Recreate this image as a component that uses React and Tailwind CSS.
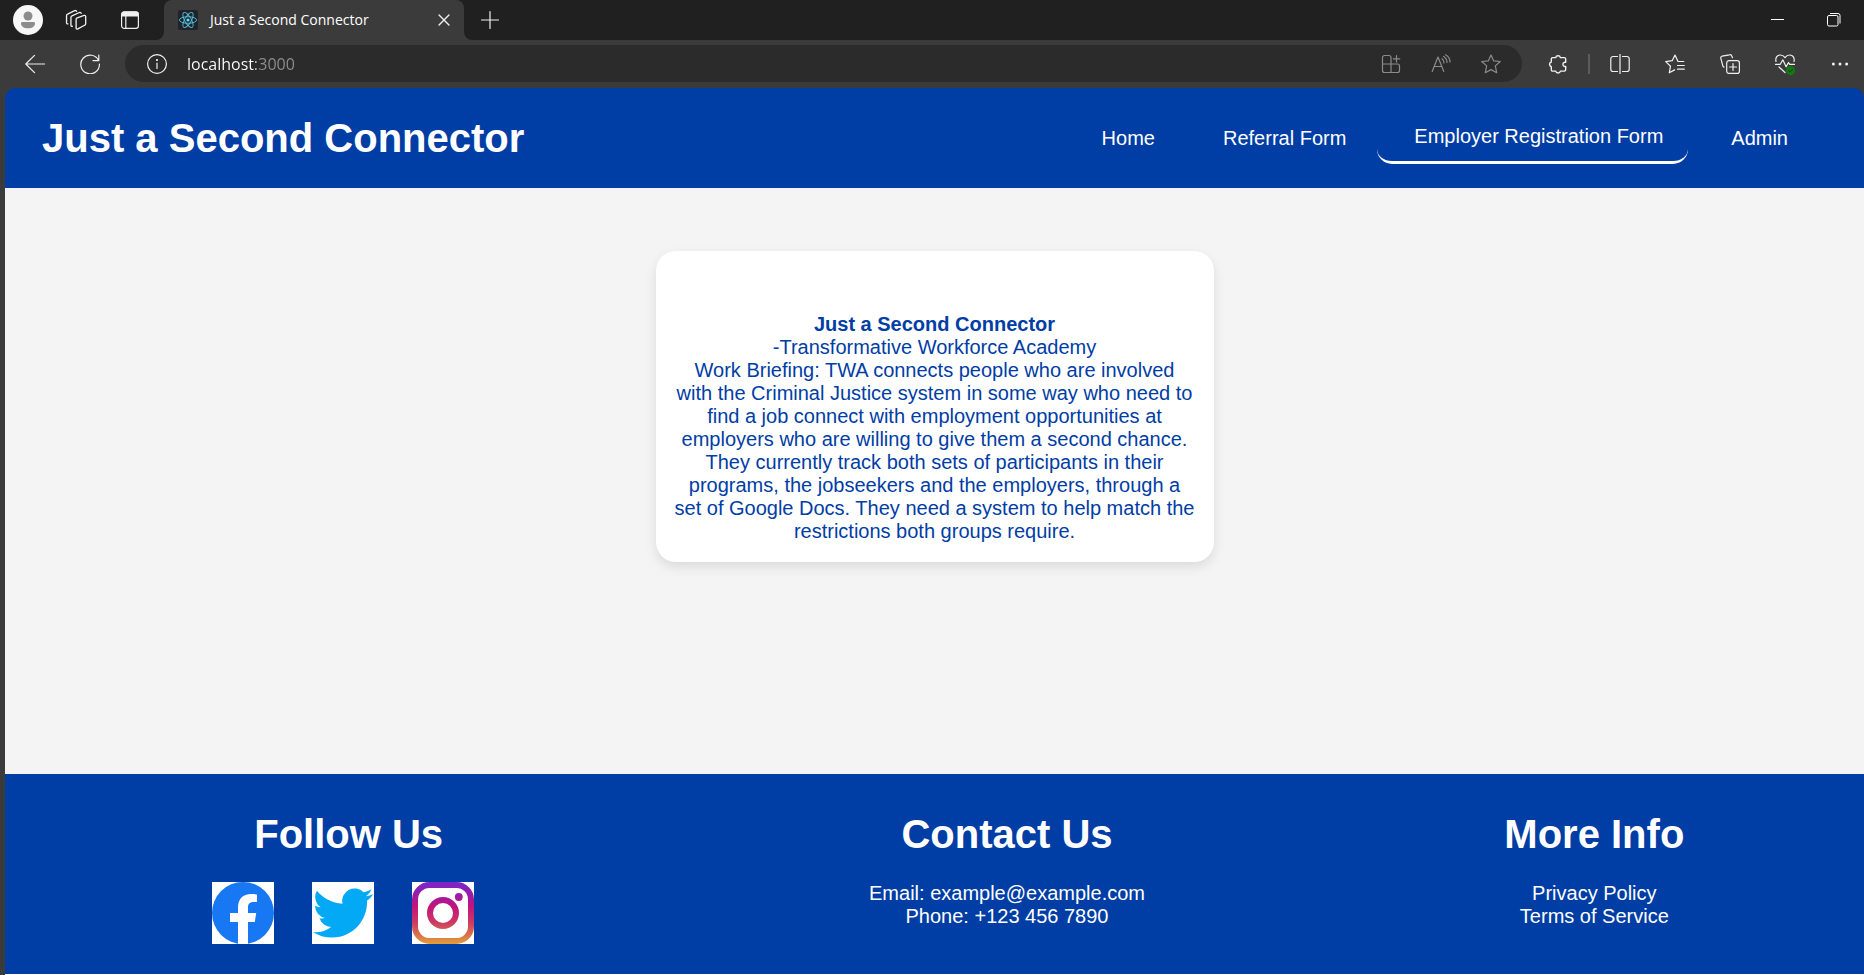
import React from "react";

function Icon({ size = "size-5", children }) {
  return (
    <svg
      viewBox="0 0 20 20"
      className={`${size} shrink-0`}
      fill="none"
      stroke="currentColor"
      strokeWidth="1.2"
      strokeLinecap="round"
      strokeLinejoin="round"
      aria-hidden="true"
    >
      {children}
    </svg>
  );
}

function BarButton({ label, className = "w-12", children }) {
  return (
    <button
      type="button"
      aria-label={label}
      className={`flex h-8 shrink-0 items-center justify-center ${className}`}
    >
      {children}
    </button>
  );
}

function ReactFavicon() {
  return (
    <svg viewBox="0 0 20 20" className="size-5 shrink-0" aria-hidden="true">
      <rect width="20" height="20" rx="2" fill="#20232a" />
      <g fill="none" stroke="#53c1de" strokeWidth="0.9">
        <ellipse cx="10" cy="10" rx="8.6" ry="3.3" />
        <ellipse cx="10" cy="10" rx="8.6" ry="3.3" transform="rotate(60 10 10)" />
        <ellipse cx="10" cy="10" rx="8.6" ry="3.3" transform="rotate(120 10 10)" />
      </g>
      <circle cx="10" cy="10" r="1.6" fill="#61dafb" />
    </svg>
  );
}

function TabStrip() {
  return (
    <div className="flex h-10 items-center bg-[#202020] text-[#f0f0f0]">
      <div className="flex flex-1 items-center self-stretch">
        <BarButton label="Profile" className="ml-1 w-12">
          <svg viewBox="0 0 30 30" className="size-[30px]" aria-hidden="true">
            <circle cx="15" cy="15" r="15" fill="#f7f7f7" />
            <circle cx="15" cy="11" r="4.5" fill="#8c8c8c" />
            <path d="M9.5 17h11c1 0 1.5.6 1.5 1.4 0 3-3 4.9-7 4.9s-7-1.9-7-4.9c0-.8.5-1.4 1.5-1.4z" fill="#8c8c8c" />
          </svg>
        </BarButton>
        <BarButton label="Workspaces" className="w-12">
          <Icon size="size-[22px]">
            <path d="M10.600 8.200 17.400 5.800c.8-.2 1.400.2 1.400 1v6.600c0 .7-.4 1.200-1 1.400l-6.100 3.300c-.8.4-1.600 0-1.600-.9V9.500c0-.6 0-1.100.5-1.300z" />
            <path d="M6.700 15.700c-.8.2-1.300-.2-1.300-.9V7.700c0-.7.4-1.200 1-1.400L13 3.200c.8-.3 1.500 0 1.700.8" />
            <path d="M2.700 13.500c-.8.2-1.300-.2-1.300-.9V6.100c0-.7.4-1.200 1-1.400L8.800 1.500c.8-.3 1.500 0 1.700.7" />
          </Icon>
        </BarButton>
        <BarButton label="Tab actions" className="ml-1.5 w-12">
          <Icon>
            <rect x="1.6" y="1.8" width="16.8" height="16.6" rx="2.6" />
            <path d="M2 6V4a2 2 0 0 1 2-2h12a2 2 0 0 1 2 2v2z" fill="currentColor" />
            <path d="M5.800 6.500v11.500" />
          </Icon>
        </BarButton>
        <div className="ml-0.5 flex h-10 items-end">
          <svg viewBox="0 0 8 8" className="size-2" aria-hidden="true">
            <path d="M8 0v8H0a8 8 0 0 0 8-8z" fill="#3b3b3b" />
          </svg>
          <div className="flex h-10 w-[300px] items-center rounded-t-lg bg-[#3b3b3b] pr-2.5 pl-3.5">
            <ReactFavicon />
            <span className="ml-3 flex-1 font-['Open_Sans','Noto_Sans',sans-serif] text-sm text-white">
              Just a Second Connector
            </span>
            <BarButton label="Close tab" className="w-5">
              <Icon size="size-4">
                <path d="M3.8 3.8 16.200 16.200M16.200 3.800 3.800 16.200" strokeWidth="1.7" />
              </Icon>
            </BarButton>
          </div>
          <svg viewBox="0 0 8 8" className="size-2" aria-hidden="true">
            <path d="M0 0v8h8a8 8 0 0 1-8-8z" fill="#3b3b3b" />
          </svg>
        </div>
        <BarButton label="New tab" className="w-9">
          <Icon>
            <path d="M10 1.500v17M1.500 10h17" />
          </Icon>
        </BarButton>
      </div>
      <BarButton label="Minimize" className="w-14">
        <svg viewBox="0 0 14 14" className="size-3.5" aria-hidden="true">
          <path d="M0 6.500h13" stroke="#fff" />
        </svg>
      </BarButton>
      <BarButton label="Restore" className="mr-0.5 w-14">
        <svg viewBox="0 0 14 14" className="size-3.5" fill="none" stroke="#fff" aria-hidden="true">
          <rect x="0.5" y="2.5" width="10.5" height="10.5" rx="1.5" />
          <path d="M3 .5h8a2 2 0 0 1 2 2v8" />
        </svg>
      </BarButton>
    </div>
  );
}

function AddressBar() {
  return (
    <div className="flex h-[37px] flex-1 items-center rounded-full bg-[#2b2b2b] pr-1.5 pl-[22px]">
      <Icon>
        <circle cx="10" cy="10" r="9.4" />
        <path d="M10 9v5.500" />
        <circle cx="10" cy="6" r=".5" fill="currentColor" />
      </Icon>
      <input
        type="text"
        aria-label="Address"
        defaultValue="localhost:3000"
        className="ml-5 min-w-0 flex-1 bg-linear-to-r from-white from-[69px] to-[#8f8f8f] to-[69px] bg-clip-text font-['Open_Sans','Noto_Sans',sans-serif] text-base text-transparent outline-none"
      />
      <div className="flex text-[#8b8b8b]">
        <BarButton label="App available" className="w-[50px]">
          <Icon>
            <path d="M10 10V3.500a2 2 0 0 0-2-2H3.500a2 2 0 0 0-2 2V16.500a2 2 0 0 0 2 2H16.500a2 2 0 0 0 2-2V12a2 2 0 0 0-2-2H1.500M10 10v8.500M15.500 1.500v6.500M12.300 4.800h6.500" />
          </Icon>
        </BarButton>
        <BarButton label="Read aloud" className="w-[50px]">
          <Icon>
            <path d="M1.200 17.500 7 3l5.800 14.500M3.200 12.500h7.600M11 4.800c1.300 1 2 2.500 2 4.200M12.500 2.300c2.200 1.500 3.500 3.700 3.500 6.200M14.500.8C17.300 2.400 19 5 19 8" />
          </Icon>
        </BarButton>
        <BarButton label="Add to favorites" className="w-[50px]">
          <Icon>
            <path d="M10 1 12.600 6.800 19.300 7.500 14.300 11.900 15.700 18.700 10 15.600 4.300 18.700 5.700 11.900.7 7.500 7.400 6.800z" />
          </Icon>
        </BarButton>
      </div>
    </div>
  );
}

function Toolbar() {
  return (
    <div className="flex h-12 items-center bg-[#3b3b3b] pb-px pl-[11px] text-[#f0f0f0]">
      <BarButton label="Back">
        <Icon>
          <path d="M19.500 10H.8M9.500 1.300.8 10l8.700 8.700" />
        </Icon>
      </BarButton>
      <BarButton label="Refresh" className="ml-[7px] w-12">
        <Icon>
          <path d="M18.600 6.600A9.300 9.300 0 1 0 19.400 10M18.800 1v5.700H13" />
        </Icon>
      </BarButton>
      <div className="ml-[11px] flex flex-1">
        <AddressBar />
      </div>
      <BarButton label="Extensions" className="ml-3 w-12">
        <Icon>
          <path
            strokeWidth="1.4"
            d="M3.300 5a1.400 1.400 0 0 1 1.400-1.400H7.700a2.400 2.400 0 0 1 4.700 0h3.800A1.500 1.500 0 0 1 17.700 5v3.200h-1.100a2.200 2.200 0 0 0 0 4.300h1.100V15.600a1.500 1.500 0 0 1-1.500 1.500H12.400a2.400 2.400 0 0 1-4.700 0H4.700a1.400 1.400 0 0 1-1.400-1.500V12.600a2.400 2.400 0 0 1 0-4.600z"
          />
        </Icon>
      </BarButton>
      <div className="mx-1.5 h-5 w-0.5 bg-[#5c5c5c]" />
      <div className="flex gap-[7px]">
        <BarButton label="Split screen">
          <Icon>
            <path d="M7.500 2.500H3A2.200 2.200 0 0 0 .8 4.700v10.600A2.200 2.200 0 0 0 3 17.500h4.500M12.500 2.500H17a2.200 2.200 0 0 1 2.200 2.200v10.600a2.200 2.200 0 0 1-2.200 2.200H12.500M10 .5v19" />
          </Icon>
        </BarButton>
        <BarButton label="Favorites">
          <Icon>
            <path d="M18.800 7.500H13L10 1 7.200 6.700.7 7.600l4.800 4.600-1.200 6.600 5.300-2.900M12.500 11.500h6.800M12.500 15.200h6.800" />
          </Icon>
        </BarButton>
        <BarButton label="Collections">
          <Icon>
            <rect x="6.7" y="6.7" width="12.7" height="12.7" rx="2.2" />
            <path d="M13 9.500v7M9.500 13h7M4 13.200 3 12.300.8 4.400c-.3-1 .2-1.900 1.200-2.200L9.500.8c1-.3 2 .2 2.300 1.200l.7 1.800" />
          </Icon>
        </BarButton>
        <BarButton label="Browser essentials">
          <svg
            viewBox="0 0 20 22"
            className="h-[22px] w-5"
            fill="none"
            stroke="currentColor"
            strokeWidth="1.2"
            strokeLinecap="round"
            strokeLinejoin="round"
            aria-hidden="true"
          >
            <path d="M1 8.500C.2 5 2 2 5.200 2 7.400 2 9 3.200 10 4.700 11 3.200 12.600 2 14.800 2 18 2 19.800 5 19 8.500M.5 11.300h4.800L7.800 6.800l3.300 7 2.400-4.300 1.200 1.800h4.800M4 14l6 5.500" />
            <circle cx="15.5" cy="17.5" r="4.5" fill="#107c10" stroke="none" />
            <path d="m13.500 17.700 1.400 1.300 2.600-2.700" stroke="#2b2b2b" strokeWidth="1" />
          </svg>
        </BarButton>
        <BarButton label="Settings and more">
          <Icon>
            <g fill="currentColor" stroke="none">
              <circle cx="3.4" cy="10" r="1.5" />
              <circle cx="10" cy="10" r="1.5" />
              <circle cx="16.6" cy="10" r="1.5" />
            </g>
          </Icon>
        </BarButton>
      </div>
    </div>
  );
}

const NAV_ITEMS = [
  { label: "Home" },
  { label: "Referral Form" },
  { label: "Employer Registration Form", active: true },
  { label: "Admin" },
];

function SiteHeader() {
  return (
    <header className="flex h-[100px] items-center justify-between bg-[#003da5] pr-[51px] pl-[37px] text-white">
      <h1 className="text-[40px] leading-[46px] font-bold">Just a Second Connector</h1>
      <nav className="flex items-center gap-1.5">
        {NAV_ITEMS.map(({ label, active }) => (
          <a
            key={label}
            href="#"
            aria-current={active ? "page" : undefined}
            className={`py-[13px] pr-[25px] pl-[37px] text-xl leading-[23px] ${
              active ? "rounded-[15px] border-b-3 border-white" : ""
            }`}
          >
            {label}
          </a>
        ))}
      </nav>
    </header>
  );
}

function BriefingCard() {
  return (
    <section className="w-[558px] rounded-[20px] bg-white px-[19px] pt-[62px] pb-[19px] text-center text-xl leading-[23px] text-[#003da5] shadow-[0_5px_12px_rgba(0,0,0,0.1)]">
      <h2 className="font-bold">Just a Second Connector</h2>
      <p>-Transformative Workforce Academy</p>
      <p>
        Work Briefing: TWA connects people who are involved with the Criminal
        Justice system in some way who need to find a job connect with
        employment opportunities at employers who are willing to give them a
        second chance. They currently track both sets of participants in their
        programs, the jobseekers and the employers, through a set of Google
        Docs. They need a system to help match the restrictions both groups
        require.
      </p>
    </section>
  );
}

function FacebookLogo() {
  return (
    <svg viewBox="0 0 62 62" className="size-[62px] bg-white" role="img" aria-label="Facebook">
      <circle cx="31" cy="31" r="31" fill="#1877f2" />
      <path
        d="M26 62V40h-8v-9h8v-5.500C26 17 31 12 39 12c3 0 6 .5 6 .5V20h-3.500C37.500 20 36 22.500 36 25.200V31h8.200l-1.400 9H36v22z"
        fill="#fff"
      />
    </svg>
  );
}

function TwitterLogo() {
  return (
    <svg viewBox="-0.3 -0.3 24.6 24.6" className="size-[62px] bg-white" role="img" aria-label="Twitter">
      <path
        fill="#03a9f4"
        d="M23.953 4.570a10 10 0 01-2.825.775 4.958 4.958 0 002.163-2.723c-.951.555-2.005.959-3.127 1.184a4.920 4.920 0 00-8.384 4.482C7.690 8.095 4.067 6.130 1.640 3.162a4.822 4.822 0 00-.666 2.475c0 1.710.870 3.213 2.188 4.096a4.904 4.904 0 01-2.228-.616v.060a4.923 4.923 0 003.946 4.827 4.996 4.996 0 01-2.212.085 4.936 4.936 0 004.604 3.417 9.867 9.867 0 01-6.102 2.105c-.390 0-.779-.023-1.170-.067a13.995 13.995 0 007.557 2.209c9.053 0 13.998-7.496 13.998-13.985 0-.210 0-.420-.015-.630A9.935 9.935 0 0024 4.590z"
      />
    </svg>
  );
}

function InstagramLogo() {
  return (
    <svg viewBox="0 0 62 62" className="size-[62px] bg-white" role="img" aria-label="Instagram">
      <defs>
        <linearGradient id="ig" gradientUnits="userSpaceOnUse" x1="0" y1="0" x2="0" y2="62">
          <stop offset="0" stopColor="#7a26cc" />
          <stop offset="0.2" stopColor="#981da6" />
          <stop offset="0.4" stopColor="#c3137c" />
          <stop offset="0.65" stopColor="#cc3a62" />
          <stop offset="0.85" stopColor="#d9704a" />
          <stop offset="1" stopColor="#e3a03a" />
        </linearGradient>
      </defs>
      <rect x="3" y="3" width="56" height="56" rx="14.5" fill="none" stroke="url(#ig)" strokeWidth="6" />
      <circle cx="31" cy="31" r="13" fill="none" stroke="url(#ig)" strokeWidth="6" />
      <circle cx="46.8" cy="15" r="3.9" fill="url(#ig)" />
    </svg>
  );
}

function FooterColumn({ title, children }) {
  return (
    <section className="flex flex-col items-center gap-[25px]">
      <h2 className="text-[40px] leading-[46px] font-bold">{title}</h2>
      {children}
    </section>
  );
}

function SiteFooter() {
  return (
    <footer className="flex items-start justify-around bg-[#003da5] pt-[37px] pb-[30px] pl-[3px] text-center text-xl leading-[23px] text-white">
      <FooterColumn title="Follow Us">
        <div className="flex gap-[38px] pr-9 pl-6">
          <a href="#"><FacebookLogo /></a>
          <a href="#"><TwitterLogo /></a>
          <a href="#"><InstagramLogo /></a>
        </div>
      </FooterColumn>
      <FooterColumn title="Contact Us">
        <div>
          <p>Email: example@example.com</p>
          <p>Phone: +123 456 7890</p>
        </div>
      </FooterColumn>
      <FooterColumn title="More Info">
        <div className="flex flex-col">
          <a href="#">Privacy Policy</a>
          <a href="#">Terms of Service</a>
        </div>
      </FooterColumn>
    </footer>
  );
}

export default function App() {
  return (
    <div className="flex min-h-screen flex-col bg-[#3b3b3b] font-['Liberation_Sans',Arial,sans-serif]">
      <TabStrip />
      <Toolbar />
      <div className="ml-[5px] flex flex-1 flex-col overflow-hidden rounded-t-[10px] border-b border-white">
        <SiteHeader />
        <main className="flex flex-1 flex-col items-center bg-[#f4f4f4] pt-[63px] pb-8">
          <BriefingCard />
        </main>
        <SiteFooter />
      </div>
    </div>
  );
}
